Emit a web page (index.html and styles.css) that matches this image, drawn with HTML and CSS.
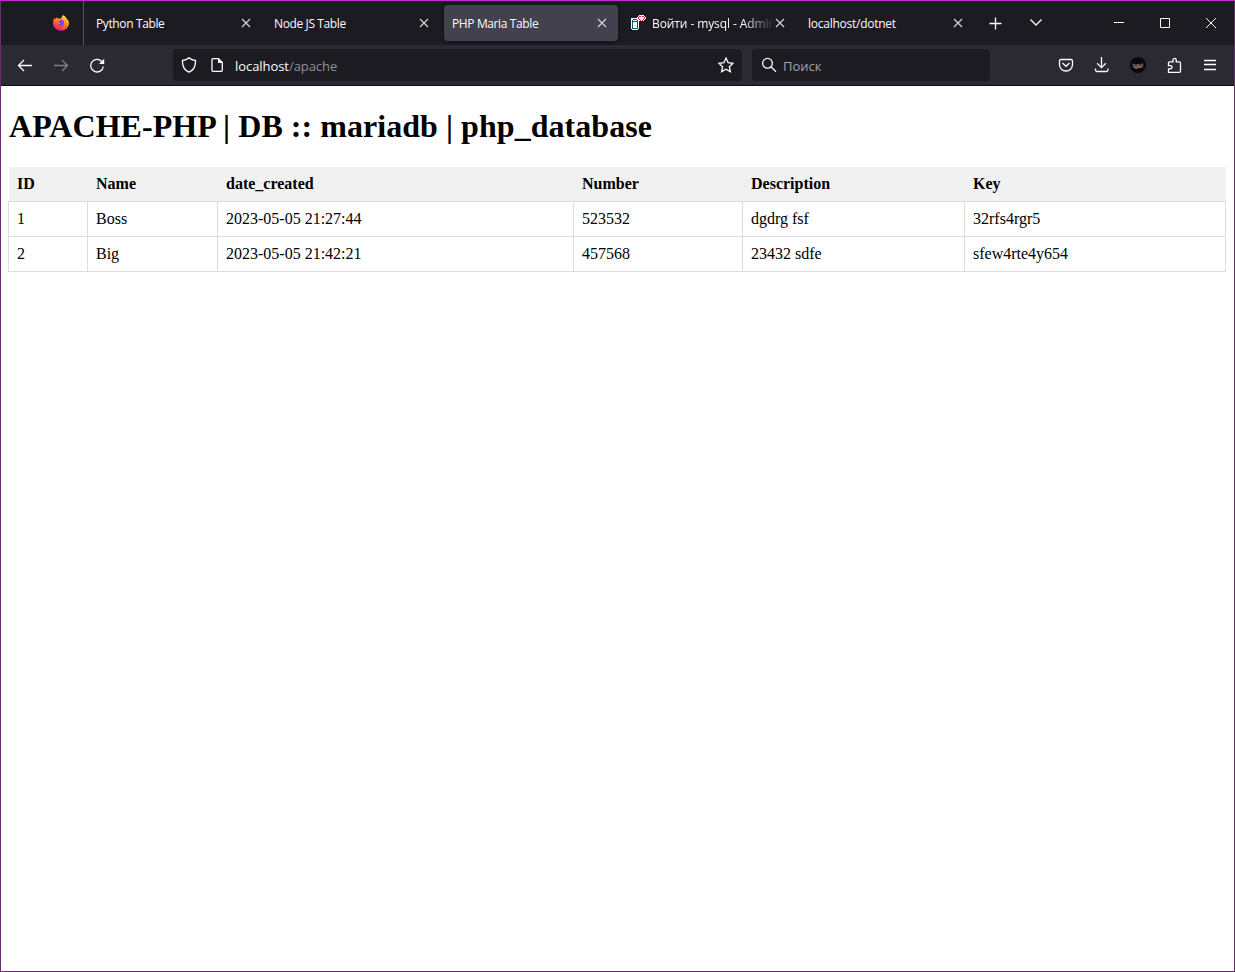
FILE: index.html
```html
<!DOCTYPE html>
<html lang="ru">
<head>
<meta charset="utf-8">
<title>PHP Maria Table</title>
<link rel="stylesheet" href="styles.css">
</head>
<body>
<div class="window">
  <header class="tabbar">
    <div class="pinned">
      <svg class="firefox" width="16" height="16" viewBox="0 0 16 16">
        <defs>
          <linearGradient id="flame" x1="0.8" y1="0" x2="0.3" y2="1"><stop offset="0" stop-color="#fff04a"/><stop offset=".4" stop-color="#ff980e"/><stop offset=".72" stop-color="#ff4545"/><stop offset="1" stop-color="#e31587"/></linearGradient>
        </defs>
        <path fill="url(#flame)" d="M10 0c2.300 1.200 3 2.300 3.200 3.200C15 4.600 16 6.400 16 8.600A8 7.400 0 0 1 0 8.300C0 5.800.7 4.200 2 2.800V4.200C2.600 3.400 3.400 2.900 4 2.200l.6 1.500C6 3.300 7.200 3.300 8 3.800 8.400 2.300 9.200 1 10 0z"/>
        <path fill="#8b3fe8" d="M7.600 4.900c1.700-.6 3.500.4 3.600 2.800.1 2.200-1.400 3.600-3.400 3.600-1.800 0-3-1-3.400-2.300 1.300.7 2.600.2 3.300-.6L5.500 7.300c0-.8.900-2.100 2.100-2.400z"/>
      </svg>
    </div>
    <div class="tab"><span class="label">Python Table</span><svg class="close" viewBox="0 0 10 10"><path d="M1 1l8 8M9 1L1 9"/></svg></div>
    <div class="tab"><span class="label">Node JS Table</span><svg class="close" viewBox="0 0 10 10"><path d="M1 1l8 8M9 1L1 9"/></svg></div>
    <div class="tab active"><span class="label">PHP Maria Table</span><svg class="close" viewBox="0 0 10 10"><path d="M1 1l8 8M9 1L1 9"/></svg></div>
    <div class="tab">
      <svg class="favicon" width="16" height="16" viewBox="0 0 16 16" shape-rendering="crispEdges">
        <path fill="#fff" d="M1 3h6V2h1V1h1V0h5v1h1v1h1v2h-1v1h-1v1H9v8H8v1H2v-1H1V4h0z"/>
        <path fill="#0c5c6e" d="M3 4h4v1H3zM2 5h1v9H2zM7 5h1v9H7zM3 6h4v1H3zM3 13h4v1H3z"/>
        <path fill="#e01b24" d="M9 1h2v1H9zM12 1h2v1h-2zM8 2h1v2H8zM14 2h1v2h-1zM9 4h1v1H9zM13 4h1v1h-1zM10 5h1v1h-1zM12 5h1v1h-1z"/>
      </svg>
      <span class="label fade">Войти - mysql - Admin</span><svg class="close" viewBox="0 0 10 10"><path d="M1 1l8 8M9 1L1 9"/></svg>
    </div>
    <div class="tab"><span class="label wide">localhost/dotnet</span><svg class="close" viewBox="0 0 10 10"><path d="M1 1l8 8M9 1L1 9"/></svg></div>
    <div class="tabtools">
      <svg width="14" height="14" viewBox="0 0 14 14"><path d="M7.500 1.500v12M1.500 7.500h12"/></svg>
      <svg width="14" height="14" viewBox="0 0 14 14"><path d="M1.500 3.500L7 9l5.500-5.500"/></svg>
    </div>
    <div class="winbtns">
      <svg width="12" height="12" viewBox="0 0 12 12"><path d="M1 5.500h10"/></svg>
      <svg width="12" height="12" viewBox="0 0 12 12"><path d="M1.500 1.500h9v9h-9z"/></svg>
      <svg width="12" height="12" viewBox="0 0 12 12"><path d="M1 1l10 10M11 1L1 11"/></svg>
    </div>
  </header>
  <nav class="toolbar">
    <div class="navbtns">
      <svg width="16" height="16" viewBox="0 0 16 16"><path d="M15 8.500H1.500M7 3L1.500 8.500 7 14"/></svg>
      <svg class="dim" width="16" height="16" viewBox="0 0 16 16"><path d="M1 8.500h13.500M9 3L14.500 8.500 9 14"/></svg>
      <svg width="16" height="16" viewBox="0 0 16 16"><path d="M13.300 5.200A6.300 6.300 0 1 0 14.300 9.500"/><path class="solid" d="M15.200 1.800V7H10z"/></svg>
    </div>
    <div class="urlbar">
      <svg width="16" height="16" viewBox="0 0 16 16"><path d="M8 .8C6.300 2.400 4 3.300 1.500 3.500c-.3 5 1.500 9.400 6.500 11.700 5-2.300 6.800-6.700 6.500-11.700C12 3.300 9.700 2.400 8 .8z"/></svg>
      <svg class="page" width="16" height="16" viewBox="0 0 16 16"><path d="M4 1.700h5.500L13.300 5.500v7.800q0 1-1 1H4q-1 0-1-1V2.700q0-1 1-1z"/><path class="solid" d="M9 1l5 5H9z"/></svg>
      <span class="url">localhost<span class="path">/apache</span></span>
      <svg width="16" height="16" viewBox="0 0 16 16"><path d="M8 1.100l2.100 4.600 5 .6-3.700 3.400 1 5L8 12.200l-4.400 2.500 1-5L.9 6.300l5-.6z"/></svg>
    </div>
    <div class="search">
      <svg width="16" height="16" viewBox="0 0 16 16"><circle cx="6.500" cy="6.300" r="4.900"/><path d="M10 9.800l5 5"/></svg>
      <span class="hint">Поиск</span>
    </div>
    <div class="actions">
      <svg width="16" height="16" viewBox="0 0 16 16"><path d="M3 2.500h10q1.500 0 1.500 1.500V7.800a6.500 6.200 0 0 1-13 0V4q0-1.500 1.500-1.500zM4.500 6L8 9.300 11.500 6"/></svg>
      <svg width="16" height="16" viewBox="0 0 16 16"><path d="M7.500 0v10.500M3.200 6.300l4.300 4.300 4.300-4.300M1.500 11.500v1.500q0 1.500 1.500 1.500h9.500q1.500 0 1.500-1.500v-1.500"/></svg>
      <svg class="avatar" width="16" height="16" viewBox="0 0 16 16"><circle cx="8" cy="8" r="8"/><path class="face" d="M2.500 6.700l5.500.5 5-.6.200 2.600-2 1.900-3.200.2-.8.700-2.700-.5-1.500-1.800z"/><path class="eyes" d="M4 8.200h3M9 8h3"/></svg>
      <svg width="16" height="16" viewBox="0 0 16 16"><path d="M2.500 15.300V11.800h2a1.500 1.500 0 0 0 0-3.200h-2V5.800q0-.9.900-.9H7V3a1.600 1.600 0 0 1 3.200 0v1.900h3.100q1.200 0 1.200 1.200v8q0 1.200-1.200 1.200z"/></svg>
      <svg width="16" height="16" viewBox="0 0 16 16"><path d="M2 3.500h12M2 7.500h12M2 12.500h12"/></svg>
    </div>
  </nav>
  <main class="content">
    <h1 class="title">APACHE-PHP | DB :: mariadb | php_database</h1>
    <table class="data">
      <colgroup><col class="c-id"><col class="c-name"><col class="c-date"><col class="c-num"><col class="c-desc"><col></colgroup>
      <thead><tr><th>ID</th><th>Name</th><th>date_created</th><th>Number</th><th>Description</th><th>Key</th></tr></thead>
      <tbody>
        <tr><td>1</td><td>Boss</td><td>2023-05-05 21:27:44</td><td>523532</td><td>dgdrg fsf</td><td>32rfs4rgr5</td></tr>
        <tr><td>2</td><td>Big</td><td>2023-05-05 21:42:21</td><td>457568</td><td>23432 sdfe</td><td>sfew4rte4y654</td></tr>
      </tbody>
    </table>
  </main>
</div>
</body>
</html>
```
FILE: styles.css
```css
* { box-sizing: border-box; }
body { margin: 0; background: #fff; }
.window {
  display: flex;
  flex-direction: column;
  height: 972px;
  border: 1px solid #6a2c70;
  border-top-color: #c42bd0;
}
svg { flex: none; fill: none; stroke: #fbfbfe; stroke-width: 1.3; }
.solid { fill: #fbfbfe; stroke: none; }

.tabbar {
  display: flex;
  align-items: center;
  height: 44px;
  flex: none;
  background: #1c1b22;
  color: #fbfbfe;
  font: 12px/16px "Open Sans", "Noto Sans", sans-serif;
}
.pinned { width: 83px; height: 44px; margin-right: 2px; padding: 14px 0 0 52px; border-right: 1px solid #56555d; }
.firefox { display: block; stroke: none; }
.tab {
  display: flex;
  align-items: center;
  width: 174px;
  height: 36px;
  margin: 0 2px;
  padding: 0 11px 0 8px;
  border-radius: 4px;
}
.tab.active { background: #42414d; box-shadow: 0 0 4px rgba(0, 0, 0, .4); }
.label { flex: 1; min-width: 0; padding-top: 2px; overflow: hidden; white-space: nowrap; letter-spacing: -.38px; }
.label.wide { letter-spacing: -.25px; }
.label.fade { letter-spacing: -.1px; -webkit-mask-image: linear-gradient(to left, transparent, #000 32px); mask-image: linear-gradient(to left, transparent, #000 32px); }
.favicon { margin-right: 6px; stroke: none; }
.close { width: 10px; height: 10px; stroke: #d8d8dc; stroke-width: 1.1; }
.tabtools { display: flex; gap: 27px; margin-left: 12px; }
.winbtns { display: flex; gap: 34px; margin: 0 17px 0 auto; }
.winbtns svg { stroke-width: 1; }

.toolbar {
  display: flex;
  align-items: center;
  height: 41px;
  flex: none;
  border-bottom: 1px solid #0c0c0d;
  background: #2b2a33;
  font: 13px/18px "Open Sans", "Noto Sans", sans-serif;
}
.navbtns { display: flex; gap: 20px; width: 172px; padding-left: 16px; }
.dim { opacity: .4; }
.urlbar, .search { display: flex; align-items: center; height: 32px; border-radius: 4px; background: #1c1b22; }
.urlbar { width: 569px; padding: 0 8px; }
.page { margin-left: 12px; }
.url { flex: 1; margin-left: 10px; padding-top: 2px; color: #fbfbfe; letter-spacing: -.06px; }
.path { color: #8f8f98; }
.search { width: 238px; margin-left: 10px; padding-left: 9px; }
.hint { margin-left: 6px; padding-top: 2px; color: #a3a3aa; }
.actions { display: flex; gap: 20px; margin: 0 16px 0 auto; }
.avatar { stroke: none; fill: #09090b; }
.face { fill: #79615b; }
.eyes { stroke: #251a1b; stroke-width: 1; }

.content { padding: 22px 8px 0; font: 16px/18px "Liberation Serif", "Times New Roman", serif; color: #000; }
.title { margin: 0 0 22px; font-size: 32px; line-height: 37px; letter-spacing: .045px; }
.data { width: 1218px; margin-left: -1px; table-layout: fixed; border-collapse: collapse; }
.data th, .data td { padding: 8px; text-align: left; }
.data td { border: 1px solid #ddd; }
.data th { padding-left: 8.5px; background: #f1f1f1; }
.c-id { width: 79px; }
.c-name { width: 130px; }
.c-date { width: 356px; }
.c-num { width: 169px; }
.c-desc { width: 222px; }
```
